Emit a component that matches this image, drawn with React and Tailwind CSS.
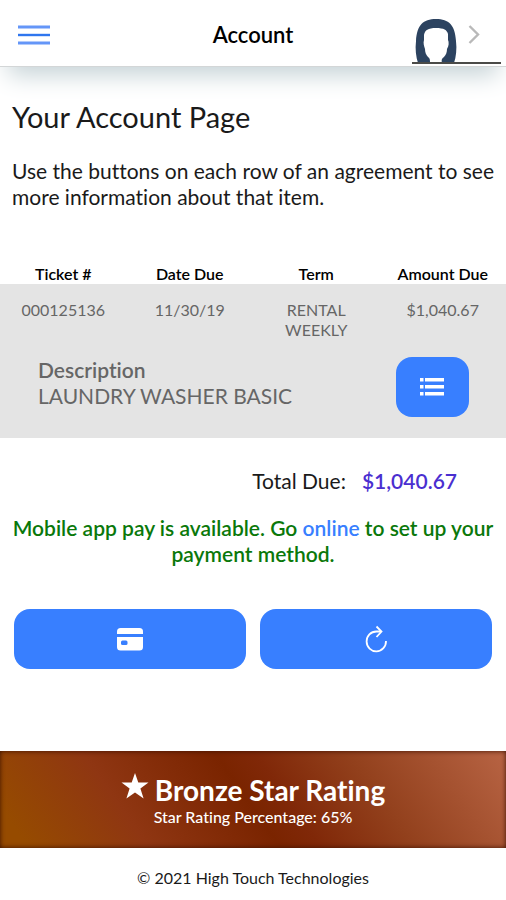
import { useState } from 'react';

const agreements = [
  {
    ticket: '000125136',
    dateDue: '11/30/19',
    term: 'RENTAL WEEKLY',
    amountDue: '$1,040.67',
    description: 'LAUNDRY WASHER BASIC',
  },
];

function MenuIcon() {
  return (
    <svg viewBox="0 0 32 20" className="w-8 h-5" aria-hidden="true">
      <path d="M0 2h32M0 18h32" stroke="#6496f8" strokeWidth="3" />
      <path d="M0 10h32" stroke="#2f76ee" strokeWidth="2.4" />
    </svg>
  );
}

function Avatar() {
  return (
    <svg viewBox="0 0 90 46" className="w-[90px] h-[46px]" aria-hidden="true">
      <path
        d="M6 45C4 39 3 31 4 23C5 7 11 1 24 1C37 1 43 7 44 23C45 31 44 39 42 45H30C29 42 30 40 32 39C34 37 35 34 35 31C37 28 37 24 36 22V16C35 12 32 10 24 10C16 10 13 12 12 17V22C11 25 12 28 13 31C13 34 14 37 16 39C18 40 18 42 18 45Z"
        fill="#2c4360"
      />
      <path d="M57.5 8L66 16.5L57.5 25" fill="none" stroke="#b9b9b9" strokeWidth="2.4" />
      <path d="M0 45h89" stroke="#4b4b48" strokeWidth="1.8" />
    </svg>
  );
}

function ListIcon() {
  return (
    <svg viewBox="0 0 26 20" className="w-[26px] h-5" fill="white" aria-hidden="true">
      <path d="M1 1h3.5v3.5H1zM6 1h19v3.5H6zM1 8h3.5v3.5H1zM6 8h19v3.5H6zM1 15h3.5v3.5H1zM6 15h19v3.5H6z" />
    </svg>
  );
}

function CardIcon() {
  return (
    <svg viewBox="0 0 28 24" className="w-7 h-6" aria-hidden="true">
      <path d="M1 7V4.5Q1 1 4.5 1H23.5Q27 1 27 4.5V7Z" fill="white" />
      <path d="M1 10H27V20Q27 23.5 23.5 23.5H4.5Q1 23.5 1 20Z" fill="white" />
      <rect x="5" y="13.5" width="6.5" height="4.5" rx="1.5" fill="#387fff" />
    </svg>
  );
}

function RefreshIcon() {
  return (
    <svg viewBox="0 0 24 28" className="w-6 h-7" fill="none" stroke="white" strokeWidth="1.8" aria-hidden="true">
      <path d="M22 16A9.7 9.9 0 1 1 12.3 6.5H17" />
      <path d="M12.5 1.5L17.5 6.5L12.5 12" />
    </svg>
  );
}

function StarIcon() {
  return (
    <svg viewBox="0 0 28 26" className="w-7 h-[26px]" fill="white" aria-hidden="true">
      <path d="M14 0L17.3 9.5H27.5L19.4 15.5L22.6 25.5L14 19.5L5.4 25.5L8.6 15.5L.5 9.5H10.7Z" />
    </svg>
  );
}

export default function App() {
  const [menuOpen, setMenuOpen] = useState(false);

  return (
    <div className="min-h-screen bg-white text-[#1a1a1a] font-['Lato',sans-serif] [font-variant-ligatures:none]">
      <header className="grid grid-cols-[1fr_auto_1fr] items-center h-[67px] px-1 border-b border-[#d3d6d7] shadow-[0_16px_24px_-8px_#c5d2d6]">
        <button
          type="button"
          aria-label="Menu"
          aria-expanded={menuOpen}
          onClick={() => setMenuOpen(!menuOpen)}
          className="justify-self-start pt-1 pl-[14px]"
        >
          <MenuIcon />
        </button>
        <h1 className="pt-1 text-[22px] leading-7 font-semibold text-black">Account</h1>
        <a href="#profile" aria-label="Profile" className="justify-self-end self-end pb-[2px]">
          <Avatar />
        </a>
      </header>

      <main>
        <section className="px-3 pt-[30px]">
          <h2 className="text-[29px] leading-10">Your Account Page</h2>
          <p className="mt-[21px] text-[21px] leading-[26px]">
            Use the buttons on each row of an agreement to see more information about that item.
          </p>
        </section>

        <table className="mt-[54px] w-full table-fixed text-center text-[16px] leading-5">
          <thead className="text-black">
            <tr>
              <th className="font-semibold">Ticket #</th>
              <th className="font-semibold">Date Due</th>
              <th className="font-semibold">Term</th>
              <th className="font-semibold">Amount Due</th>
            </tr>
          </thead>
          {agreements.map((item) => (
            <tbody key={item.ticket} className="bg-[#e4e4e4] text-[#666]">
              <tr className="align-top">
                <td className="pt-4">{item.ticket}</td>
                <td className="pt-4">{item.dateDue}</td>
                <td className="pt-4 px-6">{item.term}</td>
                <td className="pt-4">{item.amountDue}</td>
              </tr>
              <tr className="align-top">
                <td colSpan={3} className="pt-[17px] pl-[38px] text-left text-[21px] leading-[26px]">
                  <div className="font-semibold">Description</div>
                  <div>{item.description}</div>
                </td>
                <td className="pt-[17px] pb-[21px] pl-4">
                  <button
                    type="button"
                    aria-label="Agreement details"
                    className="flex items-center justify-center w-[73px] h-[60px] rounded-2xl bg-[#387fff]"
                  >
                    <ListIcon />
                  </button>
                </td>
              </tr>
            </tbody>
          ))}
        </table>

        <div className="mt-[30px] pr-[49px] flex justify-end gap-4 text-[21px] leading-[26px]">
          <span>Total Due:</span>
          <span className="font-semibold text-[#4a2fd0]">$1,040.67</span>
        </div>

        <p className="mt-[21px] px-2 text-center text-[21px] leading-[26px] font-semibold text-[#0a780a]">
          Mobile app pay is available. Go{' '}
          <a href="#online" className="text-[#387fff]">online</a> to set up your payment method.
        </p>

        <div className="mt-[42px] px-[14px] grid grid-cols-2 gap-[14px]">
          <button
            type="button"
            aria-label="Make a payment"
            className="flex items-center justify-center h-[60px] rounded-2xl bg-[#387fff]"
          >
            <CardIcon />
          </button>
          <button
            type="button"
            aria-label="Refresh"
            className="flex items-center justify-center h-[60px] rounded-2xl bg-[#387fff]"
          >
            <RefreshIcon />
          </button>
        </div>

        <section className="mt-[82px] pt-[22px] pb-[21px] text-center text-white bg-[linear-gradient(55deg,#964b00_5%,#8f3612_26%,#7a2400_49%,#802808_56%,#92401c_72%,#b86444_100%)] shadow-[inset_0_0_5px_#3a1000]">
          <div className="flex justify-center gap-[6px]">
            <StarIcon />
            <h3 className="text-[28px] leading-[34px] font-bold">Bronze Star Rating</h3>
          </div>
          <p className="text-[16px] leading-5 font-medium">Star Rating Percentage: 65%</p>
        </section>
      </main>

      <footer className="py-5 text-center text-[16px] leading-5">© 2021 High Touch Technologies</footer>
    </div>
  );
}
